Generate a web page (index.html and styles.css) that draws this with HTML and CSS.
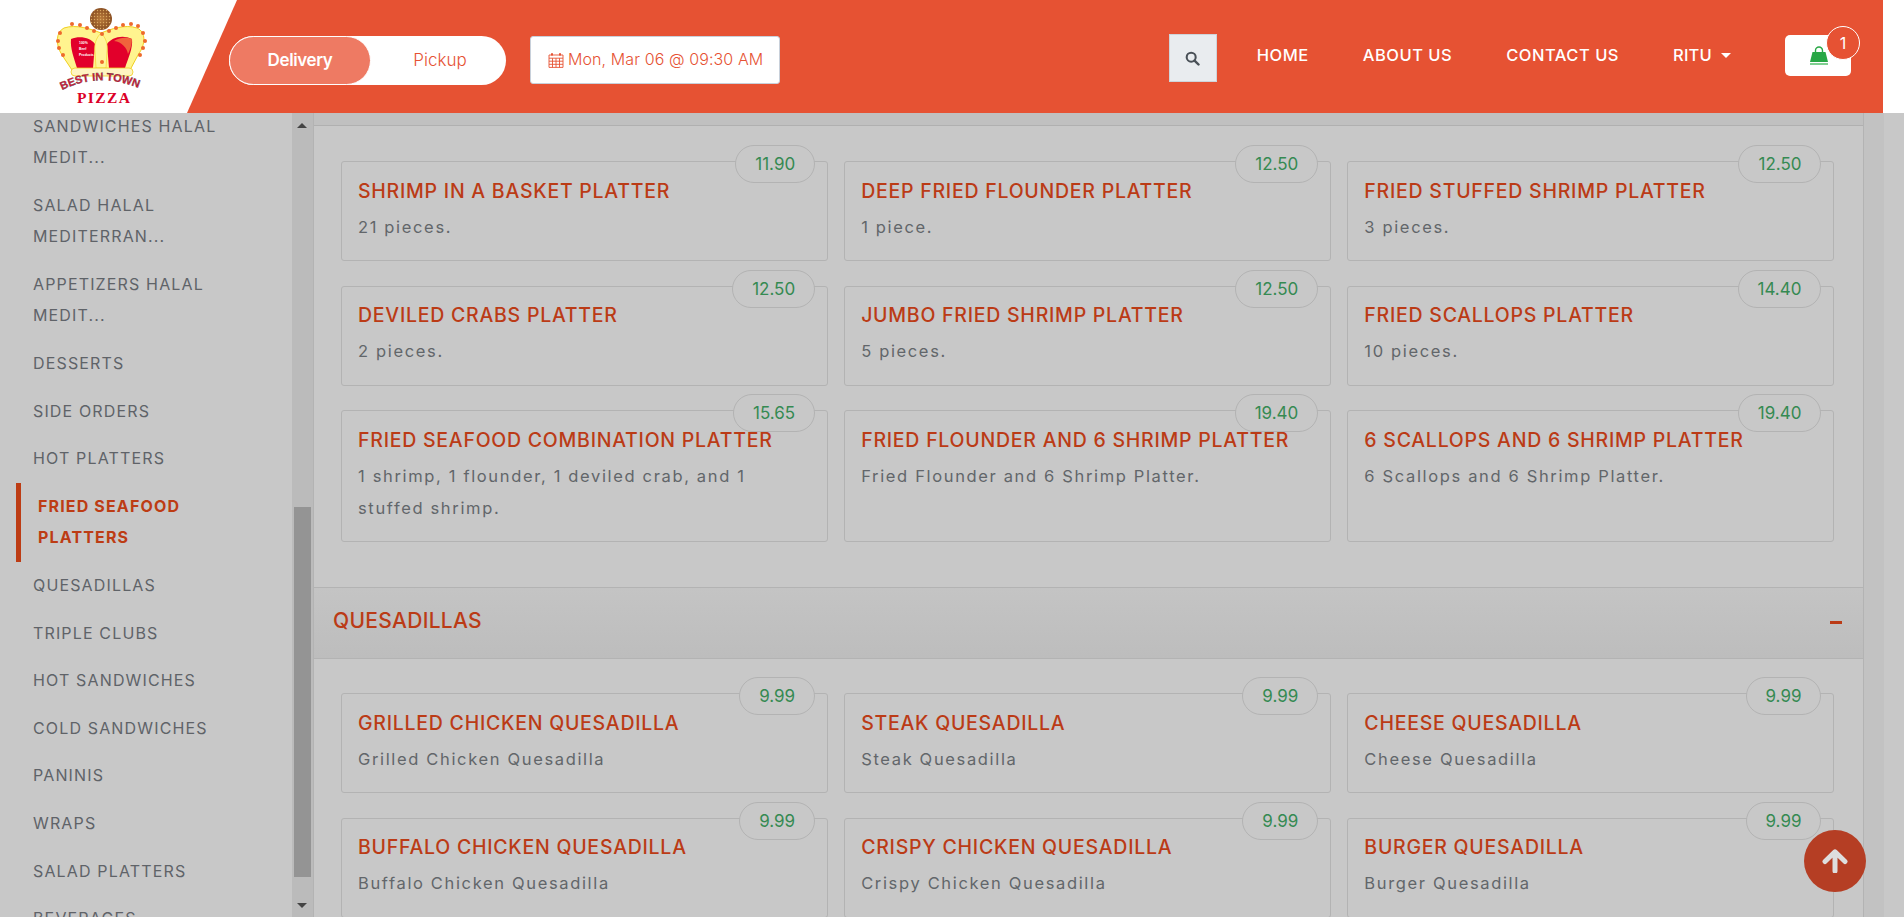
FILE: index.html
```html
<!DOCTYPE html>
<html lang="en">
<head>
<meta charset="utf-8">
<title>Best In Town Pizza</title>
<link rel="stylesheet" href="styles.css">
</head>
<body>
<header class="header">
  <a class="logo">
    <svg class="logo-svg" viewBox="0 0 140 112" width="140" height="112">
      <defs>
        <radialGradient id="ball"><stop offset="0" stop-color="#b87a3a"/><stop offset="1" stop-color="#8a4f22"/></radialGradient>
        <pattern id="dots" width="3" height="3" patternUnits="userSpaceOnUse"><circle cx="1.5" cy="1.5" r=".7" fill="#d9a760"/></pattern>
        <path id="arc" d="M32 90 Q72 70 118 92"/>
      </defs>
      <circle cx="71" cy="19" r="11" fill="url(#ball)"/>
      <circle cx="71" cy="19" r="11" fill="url(#dots)"/>
      <path class="frame" d="M71 33C61 29 46 24 34 28C26 32 25 44 32 55L42 70H100L108 55C116 44 116 32 107 28C95 24 81 29 71 33Z"/>
      <path class="red" d="M41 39C50 35 61 38 65 44L63 68H47C44 58 40 48 41 39Z"/>
      <path class="red" d="M77 44C81 38 92 34 102 39C103 49 98 58 95 68H79Z"/>
      <path class="glow" d="M84 41C90 37 97 37 102 39C102 44 100 50 98 54C97 48 92 42 84 41Z"/>
      <path class="pillar" d="M71 33C76 38 78 44 77 52L76 68H66L65 52C64 44 66 38 71 33Z"/>
      <g class="beads">
        <circle cx="30" cy="33" r="2"/><circle cx="42" cy="24" r="2"/><circle cx="50" cy="25" r="2"/><circle cx="57" cy="28" r="2"/><circle cx="64" cy="31" r="2"/><circle cx="72" cy="34" r="2"/><circle cx="79" cy="31" r="2"/><circle cx="86" cy="28" r="2"/><circle cx="93" cy="25" r="2"/><circle cx="101" cy="24" r="2"/><circle cx="108" cy="26" r="2"/><circle cx="113" cy="33" r="2"/><circle cx="115" cy="41" r="2"/><circle cx="113" cy="48" r="2"/><circle cx="110" cy="55" r="2"/><circle cx="28" cy="41" r="2"/><circle cx="29" cy="48" r="2"/><circle cx="33" cy="55" r="2"/><circle cx="72" cy="62" r="2"/>
      </g>
      <rect class="band" x="41" y="68" width="62" height="8" rx="4"/>
      <text class="tiny" x="49" y="44">100%</text>
      <text class="tiny" x="49" y="50">Beef</text>
      <text class="tiny" x="49" y="56">Products</text>
      <text class="best"><textPath href="#arc" startOffset="0">BEST IN TOWN</textPath></text>
      <text class="pizza" x="47" y="103">PIZZA</text>
    </svg>
  </a>
  <div class="toggle">
    <span class="toggle-on">Delivery</span>
    <span class="toggle-off">Pickup</span>
  </div>
  <div class="date">
    <svg class="cal" viewBox="0 0 16 16" width="16" height="16"><path d="M3 1.2h2v2.2H3zM11 1.2h2v2.2h-2z" fill="#e65233"/><path d="M1 3h14v12.4H1zM1 6.2h14M1 9.2h14M1 12.3h14M4.5 6.2v9.2M8 6.2v9.2M11.5 6.2v9.2" fill="none" stroke="#e65233" stroke-width=".9"/></svg>
    <span>Mon, Mar 06 @ 09:30 AM</span>
  </div>
  <nav class="nav">
    <button class="search" aria-label="Search">
      <svg viewBox="0 0 16 16" width="15" height="15"><circle cx="6.6" cy="6.6" r="4.8" fill="none" stroke="#495057" stroke-width="2.2"/><path d="M10.2 10.2l4.2 4.2" stroke="#495057" stroke-width="2.6" stroke-linecap="round"/></svg>
    </button>
    <a class="nav-link">HOME</a>
    <a class="nav-link">ABOUT US</a>
    <a class="nav-link">CONTACT US</a>
    <a class="nav-link user">RITU<i class="caret"></i></a>
    <a class="cart">
      <svg class="bag" viewBox="0 0 18 19" width="18" height="19"><path d="M5.5 7V4.5a3.5 3.5 0 0 1 7 0V7" fill="none" stroke="#28a745" stroke-width="1.4"/><path d="M2.5 6h13L18 16H0z" fill="#28a745"/><path d="M0 17h18v2H0z" fill="#7fcf90"/></svg>
      <span class="badge">1</span>
    </a>
  </nav>
</header>

<div class="page">
  <aside class="sidebar">
    <ul class="cats">
      <li>SANDWICHES HALAL MEDIT...</li>
      <li>SALAD HALAL MEDITERRAN...</li>
      <li>APPETIZERS HALAL MEDIT...</li>
      <li>DESSERTS</li>
      <li>SIDE ORDERS</li>
      <li>HOT PLATTERS</li>
      <li class="active">FRIED SEAFOOD PLATTERS</li>
      <li>QUESADILLAS</li>
      <li>TRIPLE CLUBS</li>
      <li>HOT SANDWICHES</li>
      <li>COLD SANDWICHES</li>
      <li>PANINIS</li>
      <li>WRAPS</li>
      <li>SALAD PLATTERS</li>
      <li>BEVERAGES</li>
    </ul>
    <div class="scrollbar">
      <i class="arrow up"></i>
      <div class="thumb"></div>
      <i class="arrow down"></i>
    </div>
  </aside>

  <main class="main">
    <div class="strip"></div>
    <section class="items first">
      <article class="card"><span class="price">11.90</span><h3>SHRIMP IN A BASKET PLATTER</h3><p>21 pieces.</p></article>
      <article class="card"><span class="price">12.50</span><h3>DEEP FRIED FLOUNDER PLATTER</h3><p>1 piece.</p></article>
      <article class="card"><span class="price">12.50</span><h3>FRIED STUFFED SHRIMP PLATTER</h3><p>3 pieces.</p></article>
      <article class="card"><span class="price">12.50</span><h3>DEVILED CRABS PLATTER</h3><p>2 pieces.</p></article>
      <article class="card"><span class="price">12.50</span><h3>JUMBO FRIED SHRIMP PLATTER</h3><p>5 pieces.</p></article>
      <article class="card"><span class="price">14.40</span><h3>FRIED SCALLOPS PLATTER</h3><p>10 pieces.</p></article>
      <article class="card"><span class="price">15.65</span><h3>FRIED SEAFOOD COMBINATION PLATTER</h3><p>1 shrimp, 1 flounder, 1 deviled crab, and 1 stuffed shrimp.</p></article>
      <article class="card"><span class="price">19.40</span><h3>FRIED FLOUNDER AND 6 SHRIMP PLATTER</h3><p>Fried Flounder and 6 Shrimp Platter.</p></article>
      <article class="card"><span class="price">19.40</span><h3>6 SCALLOPS AND 6 SHRIMP PLATTER</h3><p>6 Scallops and 6 Shrimp Platter.</p></article>
    </section>
    <div class="section-head"><h2>QUESADILLAS</h2><i class="minus"></i></div>
    <section class="items second">
      <article class="card"><span class="price">9.99</span><h3>GRILLED CHICKEN QUESADILLA</h3><p>Grilled Chicken Quesadilla</p></article>
      <article class="card"><span class="price">9.99</span><h3>STEAK QUESADILLA</h3><p>Steak Quesadilla</p></article>
      <article class="card"><span class="price">9.99</span><h3>CHEESE QUESADILLA</h3><p>Cheese Quesadilla</p></article>
      <article class="card"><span class="price">9.99</span><h3>BUFFALO CHICKEN QUESADILLA</h3><p>Buffalo Chicken Quesadilla</p></article>
      <article class="card"><span class="price">9.99</span><h3>CRISPY CHICKEN QUESADILLA</h3><p>Crispy Chicken Quesadilla</p></article>
      <article class="card"><span class="price">9.99</span><h3>BURGER QUESADILLA</h3><p>Burger Quesadilla</p></article>
    </section>
  </main>
  <div class="gutter"></div>
</div>

<a class="to-top" aria-label="Back to top">
  <svg viewBox="0 0 26 24" width="26" height="24"><path d="M3 12.5L13 2.8l10 9.7M13 4v18" fill="none" stroke="#dedede" stroke-width="5" stroke-linecap="round" stroke-linejoin="round"/></svg>
</a>
</body>
</html>
```
FILE: styles.css
```css
* { box-sizing: border-box; }
html, body { margin: 0; height: 917px; overflow: hidden; }
body { background: #fff; font-family: Inter, "Open Sans", sans-serif; }

.header { display: flex; align-items: flex-start; width: 1883px; height: 113px; background: #e65233; position: relative; }
.logo { display: block; width: 237px; height: 113px; padding-left: 30px; flex: none; background: #fff; clip-path: polygon(0 0, 100% 0, 187px 100%, 0 100%); }
.logo-svg { display: block; }
.frame { fill: #fff48f; stroke: #f0cf1f; stroke-width: 1; }
.red { fill: #e2002b; }
.glow { fill: #f0643c; }
.pillar { fill: #fff59a; stroke: #f0cf1f; stroke-width: .6; }
.beads circle { fill: #ee6a2c; }
.band { fill: #fff4c2; stroke: #f0cf1f; stroke-width: .8; }
.tiny { font: 700 3.4px "Liberation Sans", sans-serif; fill: #fff; }
.best { font: 700 11px "Liberation Sans", sans-serif; fill: #e01b3c; stroke: #333; stroke-width: .3; letter-spacing: -.1px; }
.pizza { font: 700 15.5px "Liberation Serif", serif; fill: #dc0028; letter-spacing: 1.4px; }

.toggle { display: flex; align-items: stretch; width: 277px; height: 49px; margin: 36px 0 0 -8px; background: #fff; border-radius: 25px; flex: none; }
.toggle-on { display: flex; align-items: center; justify-content: center; width: 142px; padding-bottom: 2px; background: #ee7a63; border: 1px solid #fff; border-radius: 25px; color: #fff; font-size: 17px; font-weight: 600; letter-spacing: -.4px; }
.toggle-off { flex: 1; display: flex; align-items: center; justify-content: center; padding: 0 0 2px 3px; color: #e65233; font-size: 17px; font-weight: 300; }

.date { display: flex; align-items: center; gap: 4px; width: 250px; height: 48px; margin: 36px 0 0 24px; padding-left: 17px; background: #fff; border: 1px solid #c8d0da; border-radius: 3px; color: #e65233; font-size: 16px; font-weight: 300; letter-spacing: .1px; flex: none; white-space: nowrap; }
.date span { margin-bottom: 2px; }
.cal { flex: none; }

.nav { display: flex; align-items: center; gap: 54px; margin-left: auto; margin-right: 32px; height: 110px; }
.search { display: flex; align-items: center; justify-content: center; width: 48px; height: 48px; margin: 6px -14px 0 0; padding: 0; background: #e9ecef; border: 1px solid #ced4da; }
.nav-link { color: #fff; font-size: 16.5px; font-weight: 500; white-space: nowrap; letter-spacing: .5px; }
.user { display: flex; align-items: center; gap: 9px; letter-spacing: .2px; }
.caret { width: 0; height: 0; border-left: 5px solid transparent; border-right: 5px solid transparent; border-top: 5px solid #fff; }
.cart { position: relative; display: block; width: 66px; height: 41px; background: #fff; border-radius: 5px; }
.bag { position: absolute; left: 25px; top: 11px; }
.badge { position: absolute; left: 41px; top: -9px; display: flex; align-items: center; justify-content: center; width: 34px; height: 34px; background: #e65233; border: 1px solid #fff; border-radius: 50%; color: #fff; font-size: 16px; }

.page { display: flex; height: 804px; background: #c8c8c8; overflow: hidden; }
.sidebar { display: flex; width: 314px; flex: none; border-right: 1px solid #b3b3b3; overflow: hidden; }
.cats { width: 292px; margin: -10.5px 0 0; padding: 0; list-style: none; flex: none; }
.cats li { padding: 8px 40px 8px 33px; font-size: 16px; line-height: 31.6px; letter-spacing: 1.15px; color: #5f6368; }
.cats .active { margin-left: 16px; padding-left: 17px; border-left: 5px solid #bd3c14; color: #bd3c14; font-weight: 700; }
.scrollbar { position: relative; display: flex; flex-direction: column; align-items: center; width: 21px; flex: none; background: #bbb; }
.thumb { width: 17px; height: 370px; margin-top: 394px; background: #949494; }
.arrow { position: absolute; left: 5px; width: 0; height: 0; border-left: 5px solid transparent; border-right: 5px solid transparent; }
.arrow.up { top: 10px; border-bottom: 5px solid #444; }
.arrow.down { top: 790px; border-top: 5px solid #444; }

.main { width: 1550px; flex: none; border-right: 1px solid #b3b3b3; overflow: hidden; }
.strip { height: 13px; background: #c0c0c0; border-bottom: 1px solid #b0b0b0; }
.items { display: grid; grid-template-columns: repeat(3, 1fr); column-gap: 16px; row-gap: 24.5px; padding: 35px 28.5px 45px 27px; }
.items.second { padding-top: 34px; }
.card { position: relative; min-height: 100px; padding: 13.5px 16px 17.5px; background: #c8c8c8; border: 1px solid #b3b3b3; border-radius: 3px; }
.card h3 { margin: 0 0 5px; font-size: 19.5px; line-height: 30px; font-weight: 500; letter-spacing: .75px; color: #bb3b16; white-space: nowrap; }
.card p { margin: 0; font-size: 16.5px; line-height: 32px; letter-spacing: 1.65px; font-weight: 400; color: #62666a; }
.price { position: absolute; top: -17px; right: 12px; height: 38px; padding: 0 19px; display: flex; align-items: center; background: #c8c8c8; border: 1px solid #b3b3b3; border-radius: 19px; color: #358a52; font-size: 17px; font-weight: 400; }
.section-head { display: flex; align-items: center; justify-content: space-between; height: 72px; padding: 0 21px 6px 19px; background: linear-gradient(#c4c4c4, #bdbdbd); border-top: 1px solid #b3b3b3; border-bottom: 1px solid #b3b3b3; }
.section-head h2 { margin: 0; font-size: 21px; font-weight: 500; letter-spacing: .3px; color: #bb3b16; }
.minus { width: 12px; height: 3px; background: #bb3b16; margin-top: 4px; }
.gutter { width: 20px; flex: none; background: #c2c2c2; }

.to-top { position: fixed; left: 1804px; top: 830px; display: flex; align-items: center; justify-content: center; width: 62px; height: 62px; background: #b53e24; border-radius: 50%; }
```
